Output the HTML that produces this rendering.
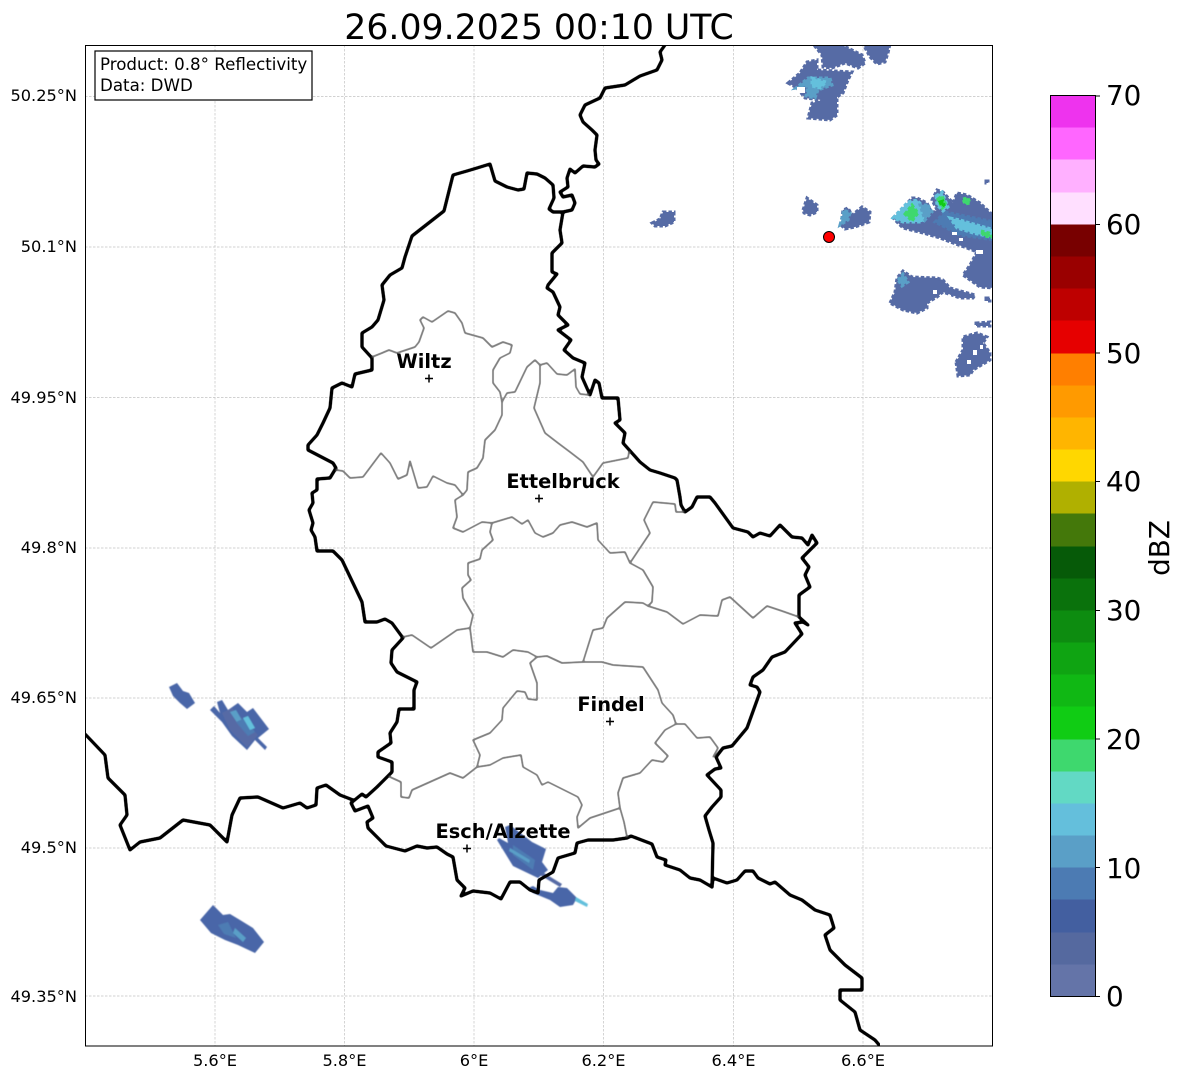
<!DOCTYPE html>
<html><head><meta charset="utf-8"><title>26.09.2025 00:10 UTC</title>
<style>
html,body{margin:0;padding:0;background:#fff}
svg{display:block}
text{font-family:"DejaVu Sans","Liberation Sans",sans-serif;fill:#000}
.g{stroke:#c2c2c2;stroke-width:.7;stroke-dasharray:2.5 1.5;fill:none}
.t{font-size:16.67px}
.u{font-size:16.2px}
.c{font-size:27.8px}
.l{font-size:19.4px;font-weight:bold;text-anchor:middle}
.b{fill:none;stroke:#000;stroke-width:2.7;stroke-linejoin:round;stroke-linecap:round}
.i{fill:none;stroke:#808080;stroke-width:1.25;stroke-linejoin:round;stroke-linecap:round}
.r polygon{stroke-width:3;stroke-dasharray:3.5 2}
.a{fill:#566ba5;stroke:#566ba5}
.d{fill:#4a66a8;stroke:#4a66a8}
.e{fill:#4d7bb3;stroke:#4d7bb3}
.f{fill:#5a9fc7;stroke:#5a9fc7}
.h{fill:#64c0dc;stroke:#64c0dc}
.j{fill:#62d9c4;stroke:#62d9c4}
.k{fill:#3ed86e;stroke:#3ed86e}
.m{fill:#10cc14;stroke:#10cc14}
.s polygon{stroke:none}
</style></head><body>
<svg width="1184" height="1081" viewBox="0 0 1184 1081" xmlns="http://www.w3.org/2000/svg">
<defs>
<clipPath id="ax"><rect x="85.500" y="45.500" width="907" height="1000.500"/></clipPath>
<filter id="sm" x="0" y="0" width="100%" height="100%" filterUnits="objectBoundingBox">
<feGaussianBlur stdDeviation="0.9"/>
<feComponentTransfer><feFuncA type="linear" slope="3" intercept="-0.55"/></feComponentTransfer>
</filter>
<filter id="sf"><feGaussianBlur stdDeviation="0.5"/></filter>
</defs>
<rect width="1184" height="1081" fill="#fff"/>
<text x="539" y="39" font-size="34.7" text-anchor="middle">26.09.2025 00:10 UTC</text>

<g class="g">
<path d="M215 45V1046M344.500 45V1046M474 45V1046M603.500 45V1046M733.500 45V1046M863 45V1046"/>
<path d="M85 96.500H992M85 247H992M85 397.500H992M85 548H992M85 698H992M85 848H992M85 996H992"/>
</g>

<g clip-path="url(#ax)">
<g class="r">
<polygon class="a" points="813,44 840,44 862,55 865,63 858,68 845,63 832,68 823,67 822,55"/>
<polygon class="a" points="863,44 890,44 888,53 885,62 877,64 870,57"/>
<polygon class="a" points="788,83 800,73 807,62 817,60 817,70 852,72 848,80 843,93 837,97 837,115 830,120 808,118 812,103 822,100 805,98 797,88"/>
<polygon class="f" points="808,78 830,78 832,85 818,90 815,98 806,96 808,86 796,88"/>
<polygon class="h" points="812,78 826,82 820,88 812,86"/>
<polygon class="a" points="652,223 660,219 663,212 674,212 674,222 665,226 655,226"/>
<polygon class="a" points="803,210 807,198 817,205 817,212 810,215 804,213"/>
<polygon class="a" points="841,225 843,210 848,208 852,215 862,207 870,212 869,222 855,227 845,229"/>
<polygon class="f" points="840,225 844,210 850,213 848,220"/>
<polygon class="a" points="893,218 912,198 917,198 927,203 932,213 937,210 932,200 937,190 943,192 953,203 957,193 967,195 980,203 995,217 995,288 980,287 963,275 970,265 977,252 967,248 953,243 940,238 923,233 903,228"/>
<polygon class="e" points="945,212 995,222 995,240 960,235 935,222"/>
<polygon class="h" points="893,218 908,202 917,200 928,212 922,222 903,222"/>
<polygon class="f" points="928,205 932,212 925,220 920,205"/>
<polygon class="h" points="950,218 960,220 977,225 995,230 995,238 973,233 957,228"/>
<polygon class="h" points="936,196 942,192 948,207 943,211 937,205"/>
<polygon class="k" points="905,214 912,205 918,213 912,221"/>
<polygon class="k" points="938,199 942,196 946,205 942,208"/>
<polygon class="m" points="940,202 943,201 944,205 942,206"/>
<polygon class="k" points="963,199 968,198 970,203 965,204"/>
<polygon class="k" points="981,231 989,233 992,237 984,236"/>
<polygon class="a" points="890,303 895,292 897,278 903,271 912,277 937,278 943,280 950,288 975,295 973,298 960,298 943,292 937,297 927,303 927,308 917,313 903,310"/>
<polygon class="f" points="898,280 903,274 908,282 902,286"/>
<polygon class="a" points="956,362 963,350 963,337 977,333 987,337 983,343 990,353 990,360 973,370 970,375 958,376"/>
<polygon class="a" points="976,323 990,322 990,326 976,326"/>
<polygon class="a" points="986,298 990,298 990,301 986,301"/>
<polygon class="a" points="986,181 988,181 988,183 986,183"/>
</g>
<g fill="#fff">
<rect x="952" y="232" width="5" height="3"/><rect x="959" y="238" width="4" height="3"/><rect x="976" y="250" width="7" height="4"/><rect x="948" y="295" width="3" height="6"/><rect x="933" y="290" width="4" height="4"/><rect x="973" y="350" width="4" height="5"/><rect x="967" y="360" width="4" height="4"/><rect x="980" y="345" width="3" height="4"/><rect x="797" y="87" width="8" height="6"/>
</g>
</g>

<g class="s" filter="url(#sf)">
<polygon class="d" points="169,687 177,683 183,691 189,693 195,703 187,709 180,703 173,696"/>
<polygon class="d" points="210,710 214,706 220,713 217,702 222,700 228,710 238,703 247,712 253,708 269,729 258,738 267,747 265,750 255,740 247,750 232,736 222,722"/>
<polygon class="a" points="222,713 232,708 258,735 247,747 230,730"/>
<polygon class="f" points="230,712 236,710 243,722 238,724"/>
<polygon class="e" points="236,722 245,718 255,732 248,736"/>
<polygon class="h" points="243,718 248,716 255,728 250,730"/>
<polygon class="d" points="200,920 213,905 223,915 230,914 240,920 253,928 264,942 255,953 238,945 225,940 211,933"/>
<polygon class="e" points="218,925 228,922 236,938 224,934"/>
<polygon class="f" points="235,928 246,938 243,942 233,933"/>
<polygon class="d" points="497,840 499,838 508,843 505,827 510,825 532,842 546,849 542,862 548,870 538,878 513,866 505,853"/>
<polygon class="e" points="513,845 535,860 533,870 513,855"/>
<polygon class="f" points="510,848 530,860 529,863 509,851"/>
<polygon class="a" points="540,875 544,873 562,884 560,887"/>
<polygon class="d" points="528,888 533,886 540,890 553,893 558,887 567,888 577,898 573,905 560,907 550,900 533,893"/>
<polygon class="h" points="576,897 588,904 587,907 575,901"/>
</g>

<g filter="url(#sm)">
<path class="i" d="M372 357L382 353L389 350L397 353L415 347L419 342L424 328L420 320L423 317L432 322L448 311L455 313L462 323L465 333L483 338L492 347L503 342L512 345L510 353L500 358L493 370L493 383L500 392L502 402L502 415L495 430L485 440L483 458L477 468L468 472L467 490L463 495L455 500L457 517L453 528L463 532L482 522L492 523L512 517L522 524L528 520L535 533L543 537L553 533L560 525L572 522L587 527L597 523L598 540L610 553L625 552L630 563L643 570L653 587L652 602L648 606"/>
<path class="i" d="M502 402L507 393L515 392L527 367L535 360L540 365L547 363L557 374L567 375L575 369L576 387L580 394L590 395"/>
<path class="i" d="M540 365L540 383L534 408L545 433L558 443L570 452L583 462L593 477L603 463L628 458L629 452"/>
<path class="i" d="M336 470L343 471L350 478L363 477L381 453L390 463L398 479L407 475L410 461L418 488L427 487L433 476L447 483L455 485L463 495"/>
<path class="i" d="M492 523L490 532L493 540L482 550L480 559L468 563L468 575L471 580L462 588L463 598L473 615L470 628L457 630L431 648L412 635L403 637"/>
<path class="i" d="M470 628L473 652L487 652L503 657L513 650L528 652L537 657L547 656L562 663L583 662L593 630L603 628L607 618L625 602L643 603L648 606L667 612L683 624L700 615L718 616L722 600L730 597L753 618L767 606L782 611L799 617"/>
<path class="i" d="M583 662L602 662L613 665L643 667L658 690L662 703L673 715L676 724L685 724L697 738L710 737L718 748L713 757"/>
<path class="i" d="M676 724L665 730L655 743L668 756L663 762L652 760L640 773L623 778L618 793L620 808L590 818L578 828L577 817L582 805L578 797L548 782L542 785L537 775L523 767L521 755L503 758L490 765L477 767L463 778L450 773L412 790L409 798L401 797L401 782L390 777"/>
<path class="i" d="M477 767L480 755L473 740L490 733L502 720L503 708L517 691L525 692L528 699L537 700L537 683L530 663L537 657"/>
<path class="i" d="M620 808L624 822L627 837"/>
<path class="i" d="M630 563L650 533L644 520L653 502L675 504L676 512L685 512"/>

<path class="b" d="M665 45L660 52L662 60L657 70L640 76L625 85L605 88L600 98L585 105L580 115L583 122L592 130L597 135L595 150L596 160L599 164L595 167L583 166L575 173L570 169L567 178L568 187L560 192L563 197L572 195L575 203L572 210L563 212L553 212L549 209L554 198L553 185L545 178L537 174L527 173L524 189L518 190L507 187L495 181L490 164L477 168L467 171L453 175L444 211L412 236L405 257L402 268L390 275L382 285L384 300L378 320L372 327L362 333L362 347L372 358L372 370L355 374L352 387L342 383L332 388L330 408L323 423L317 435L308 445L308 450L333 463L336 468L330 478L317 479L317 490L312 493L313 503L309 510L313 523L311 530L315 537L317 551L333 551L342 560L362 602L365 622L377 622L385 619L392 623L403 638L392 650L391 663L397 672L417 682L414 690L414 709L399 709L397 722L390 733L391 743L378 752L378 757L392 762L392 772L377 787L366 797L362 794L351 803L355 811L368 806L373 818L367 822L368 828L386 846L405 851L417 846L427 848L437 847L447 854L453 857L457 880L465 888L461 896L473 891L490 893L501 899L510 882L520 882L530 890L538 893L539 880L553 872L558 858L575 853L577 843L588 840L613 840L627 838L631 836L652 844L657 857L666 860L665 865L680 870L690 878L700 880L712 887"/>
<path class="b" d="M85 734L105 755L108 778L125 795L127 815L120 825L130 850L140 842L160 838L183 820L210 825L227 842L232 815L240 798L258 797L283 808L300 803L307 808L316 805L317 788L326 785L340 795L353 800"/>
<path class="b" d="M712 887L713 878L727 883L737 880L745 871L753 871L758 878L770 884L775 882L790 895L802 900L815 910L830 915L834 928L825 935L830 950L845 965L862 978L862 990L850 990L840 990L840 1000L855 1012L860 1030L875 1040L880 1046"/>
<path class="b" d="M712 887L713 843L709 830L705 816L712 807L721 797L721 790L707 775L715 769L721 768L716 757L723 748L732 746L747 728L760 692L757 687L750 685L753 677L763 670L772 657L785 652L802 634L795 623L803 622L808 625L799 617L799 595L810 587L805 575L809 567L802 558L817 543L812 535L808 545L802 538L792 537L780 525L770 536L760 533L753 537L748 532L733 528L715 503L710 497L697 497L692 507L685 512L681 505L680 497L677 480L675 478L660 473L650 470L640 462L623 443L625 433L615 423L620 420L618 398L602 398L599 383L595 380L590 395L582 377L585 363L573 358L564 350L571 340L558 330L568 325L558 315L560 307L553 292L547 288L548 285L557 274L552 272L552 253L562 243L560 230L563 212"/>
</g>

<circle cx="829" cy="237" r="5.500" fill="#f00" stroke="#000" stroke-width="1"/>

<g stroke="#000" stroke-width="1.500" fill="none">
<path d="M425 378.500H433M429 374.500V382.500"/>
<path d="M535 498.500H543M539 494.500V502.500"/>
<path d="M606 721.500H614M610 717.500V725.500"/>
<path d="M463 848.500H471M467 844.500V852.500"/>
</g>
<text class="l" x="424" y="368">Wiltz</text>
<text class="l" x="563" y="488">Ettelbruck</text>
<text class="l" x="611" y="711">Findel</text>
<text class="l" x="503" y="838">Esch/Alzette</text>

<rect x="85.500" y="45.500" width="907" height="1000.500" fill="none" stroke="#000" stroke-width="1"/>
<rect x="95" y="51" width="217" height="49" fill="#fff" stroke="#000" stroke-width="1.200"/>
<text class="t" x="100" y="70">Product: 0.8° Reflectivity</text>
<text class="t" x="100" y="91">Data: DWD</text>

<g class="u" text-anchor="end">
<text x="77" y="101">50.25°N</text>
<text x="77" y="252">50.1°N</text>
<text x="77" y="403">49.95°N</text>
<text x="77" y="553">49.8°N</text>
<text x="77" y="703">49.65°N</text>
<text x="77" y="853">49.5°N</text>
<text x="77" y="1002">49.35°N</text>
</g>
<g class="u" text-anchor="middle">
<text x="215" y="1066">5.6°E</text>
<text x="344.500" y="1066">5.8°E</text>
<text x="474" y="1066">6°E</text>
<text x="603.500" y="1066">6.2°E</text>
<text x="733.500" y="1066">6.4°E</text>
<text x="863" y="1066">6.6°E</text>
</g>

<g shape-rendering="crispEdges">
<rect x="1051" y="964" width="44.500" height="32.500" fill="#6474a8"/>
<rect x="1051" y="932" width="44.500" height="32.500" fill="#55699f"/>
<rect x="1051" y="899" width="44.500" height="33.500" fill="#435fa0"/>
<rect x="1051" y="867" width="44.500" height="32.500" fill="#4c7bb3"/>
<rect x="1051" y="835" width="44.500" height="32.500" fill="#5a9fc7"/>
<rect x="1051" y="803" width="44.500" height="32.500" fill="#64bfdc"/>
<rect x="1051" y="771" width="44.500" height="32.500" fill="#62d9c4"/>
<rect x="1051" y="739" width="44.500" height="32.500" fill="#3ed86e"/>
<rect x="1051" y="706" width="44.500" height="33.500" fill="#10cc14"/>
<rect x="1051" y="674" width="44.500" height="32.500" fill="#10b814"/>
<rect x="1051" y="642" width="44.500" height="32.500" fill="#0fa412"/>
<rect x="1051" y="610" width="44.500" height="32.500" fill="#0d8c10"/>
<rect x="1051" y="578" width="44.500" height="32.500" fill="#0a720c"/>
<rect x="1051" y="546" width="44.500" height="32.500" fill="#065a08"/>
<rect x="1051" y="513" width="44.500" height="33.500" fill="#44780a"/>
<rect x="1051" y="481" width="44.500" height="32.500" fill="#b0b000"/>
<rect x="1051" y="449" width="44.500" height="32.500" fill="#ffd700"/>
<rect x="1051" y="417" width="44.500" height="32.500" fill="#ffb500"/>
<rect x="1051" y="385" width="44.500" height="32.500" fill="#ff9a00"/>
<rect x="1051" y="353" width="44.500" height="32.500" fill="#ff7f00"/>
<rect x="1051" y="320" width="44.500" height="33.500" fill="#e60000"/>
<rect x="1051" y="288" width="44.500" height="32.500" fill="#be0000"/>
<rect x="1051" y="256" width="44.500" height="32.500" fill="#9a0000"/>
<rect x="1051" y="224" width="44.500" height="32.500" fill="#780000"/>
<rect x="1051" y="192" width="44.500" height="32.500" fill="#ffdfff"/>
<rect x="1051" y="159" width="44.500" height="33.500" fill="#ffb0ff"/>
<rect x="1051" y="127" width="44.500" height="32.500" fill="#ff66ff"/>
<rect x="1051" y="95.500" width="44.500" height="32" fill="#ee33ee"/>
</g>
<rect x="1050.500" y="95.500" width="45" height="901" fill="none" stroke="#000" stroke-width="1"/>
<path d="M1095.500 96H1100M1095.500 224.500H1100M1095.500 353H1100M1095.500 481.500H1100M1095.500 610.500H1100M1095.500 739H1100M1095.500 867.500H1100M1095.500 996.500H1100" stroke="#000" stroke-width="1"/>
<g class="c">
<text x="1106" y="105">70</text>
<text x="1106" y="234">60</text>
<text x="1106" y="363">50</text>
<text x="1106" y="491">40</text>
<text x="1106" y="620">30</text>
<text x="1106" y="749">20</text>
<text x="1106" y="878">10</text>
<text x="1106" y="1006">0</text>
</g>
<text class="c" transform="translate(1169 548) rotate(-90)" text-anchor="middle">dBZ</text>
</svg>
</body></html>
